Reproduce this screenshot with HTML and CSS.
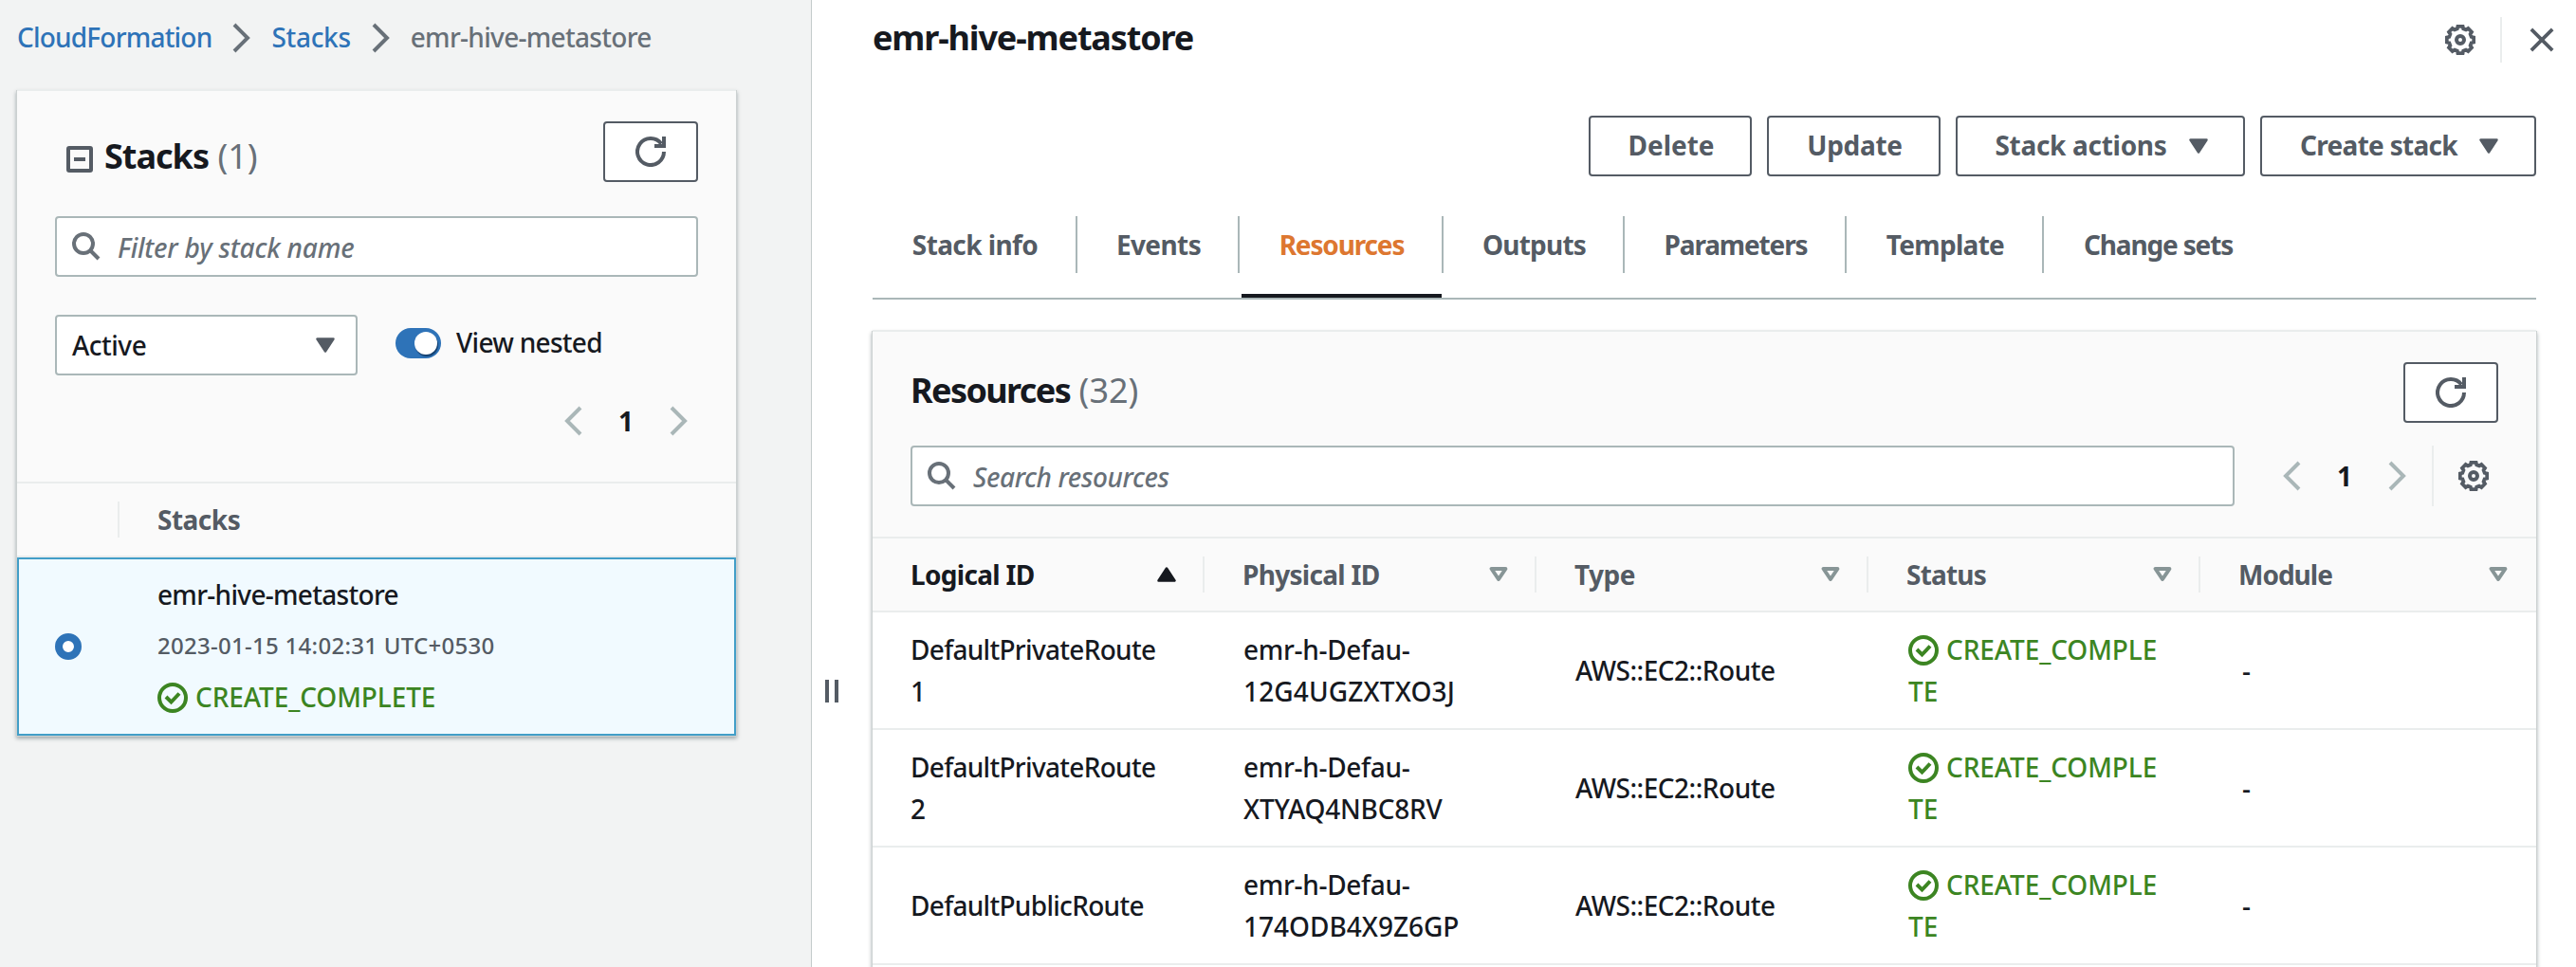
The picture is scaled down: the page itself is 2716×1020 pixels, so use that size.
FILE: index.html
```html
<!DOCTYPE html>
<html lang="en">
<head>
<meta charset="utf-8">
<title>CloudFormation - Stack emr-hive-metastore</title>
<link rel="stylesheet" href="styles.css">
</head>
<body>
<svg class="defs" aria-hidden="true">
  <symbol id="refresh" viewBox="0 0 32 32"><path d="M30 16A14 14 0 1 1 27.2 7.6M30 0V10H20" fill="none" stroke="currentColor" stroke-width="4"/></symbol>
  <symbol id="search" viewBox="0 0 30 30"><circle cx="12" cy="12" r="10" fill="none" stroke="currentColor" stroke-width="4"/><path d="M19 19L28 28" stroke="currentColor" stroke-width="4"/></symbol>
  <symbol id="right" viewBox="0 0 20 32"><path d="M2 2L16 16L2 30" fill="none" stroke="currentColor" stroke-width="4"/></symbol>
  <symbol id="left" viewBox="0 0 20 32"><path d="M18 2L4 16L18 30" fill="none" stroke="currentColor" stroke-width="4"/></symbol>
  <symbol id="caret" viewBox="0 0 20 16"><path d="M1.5 1.5H18.5L10 14.5Z" fill="currentColor" stroke="currentColor" stroke-width="2.5" stroke-linejoin="round"/></symbol>
  <symbol id="sort" viewBox="0 0 20 16"><path d="M2.6 2H17.4L10 13Z" fill="none" stroke="currentColor" stroke-width="4" stroke-linejoin="round"/></symbol>
  <symbol id="check" viewBox="0 0 32 32"><circle cx="16" cy="16" r="14" fill="none" stroke="currentColor" stroke-width="4"/><path d="M9 15L14.5 20.5L23 11.5" fill="none" stroke="currentColor" stroke-width="4"/></symbol>
  <symbol id="gear" viewBox="-16 -16 32 32"><path d="M14.2-2.6V2.6L11.7 3.2L10.6 6L12 8.3L8.3 12L6 10.6L3.2 11.7L2.6 14.2H-2.6L-3.2 11.7L-6 10.6L-8.3 12L-12 8.3L-10.6 6L-11.7 3.2L-14.2 2.6V-2.6L-11.7-3.2L-10.6-6L-12-8.3L-8.3-12L-6-10.6L-3.2-11.7L-2.6-14.2H2.6L3.2-11.7L6-10.6L8.3-12L12-8.3L10.6-6L11.7-3.2Z" fill="none" stroke="currentColor" stroke-width="3.8"/><circle r="4" fill="none" stroke="currentColor" stroke-width="4"/></symbol>
</svg>
<div class="app">
  <aside class="side">
    <nav class="crumbs">
      <a class="ls8">CloudFormation</a><svg class="chev"><use href="#right"/></svg>
      <a class="ls3">Stacks</a><svg class="chev"><use href="#right"/></svg>
      <span class="ls7">emr-hive-metastore</span>
    </nav>
    <section class="panel stacks">
      <div class="stacks-tools">
        <div class="row title-row">
          <svg class="minus" viewBox="0 0 28 28"><rect x="2" y="2" width="24" height="24" rx="1" fill="none" stroke="currentColor" stroke-width="4"/><path d="M8 14H20" stroke="currentColor" stroke-width="4"/></svg>
          <h2 class="heading"><b class="ls10">Stacks</b> <span>(1)</span></h2>
          <button class="btn refresh"><svg class="i32"><use href="#refresh"/></svg></button>
        </div>
        <div class="field filter"><svg class="i30"><use href="#search"/></svg><span class="ls2">Filter by stack name</span></div>
        <div class="row options">
          <div class="field select"><span class="ls5">Active</span><svg class="caret"><use href="#caret"/></svg></div>
          <div class="toggle"><span class="knob"></span></div>
          <span class="ls7 nested">View nested</span>
        </div>
        <div class="pager"><svg class="chev"><use href="#left"/></svg><b>1</b><svg class="chev"><use href="#right"/></svg></div>
      </div>
      <div class="stacks-head"><i></i><b class="ls5">Stacks</b></div>
      <div class="stack-item">
        <span class="radio"></span>
        <div class="stack-text">
          <div class="ls7">emr-hive-metastore</div>
          <div class="date">2023-01-15 14:02:31 UTC+0530</div>
          <div class="ok"><svg class="i32"><use href="#check"/></svg>CREATE_COMPLETE</div>
        </div>
      </div>
    </section>
  </aside>
  <div class="splitter"><i></i><i></i></div>
  <main class="main">
    <header class="top">
      <h1 class="heading"><b class="ls11">emr-hive-metastore</b></h1>
      <svg class="i32"><use href="#gear"/></svg>
      <svg class="close" viewBox="0 0 28 28"><path d="M2 2L26 26M26 2L2 26" stroke="currentColor" stroke-width="4"/></svg>
    </header>
    <div class="actions">
      <button class="btn">Delete</button>
      <button class="btn ls3">Update</button>
      <button class="btn ls3">Stack actions<svg class="caret"><use href="#caret"/></svg></button>
      <button class="btn ls7">Create stack<svg class="caret"><use href="#caret"/></svg></button>
    </div>
    <nav class="tabs">
      <a class="ls6">Stack info</a><a class="ls6">Events</a><a class="ls11 active">Resources</a><a class="ls8">Outputs</a><a class="ls11">Parameters</a><a class="ls7">Template</a><a class="ls11">Change sets</a>
    </nav>
    <section class="panel resources">
      <div class="res-tools">
        <div class="row">
          <h2 class="heading"><b class="ls14">Resources</b> <span>(32)</span></h2>
          <button class="btn refresh"><svg class="i32"><use href="#refresh"/></svg></button>
        </div>
        <div class="row search-row">
          <div class="field search"><svg class="i30"><use href="#search"/></svg><span class="ls4">Search resources</span></div>
          <div class="pager"><svg class="chev"><use href="#left"/></svg><b>1</b><svg class="chev"><use href="#right"/></svg></div>
          <div class="prefs"><svg class="i32"><use href="#gear"/></svg></div>
        </div>
      </div>
      <div class="grid thead">
        <div class="sorted"><span class="ls7">Logical ID</span><svg class="caret up"><use href="#caret"/></svg></div>
        <div><span class="ls7">Physical ID</span><svg class="caret"><use href="#sort"/></svg></div>
        <div><span class="ls5">Type</span><svg class="caret"><use href="#sort"/></svg></div>
        <div><span class="ls8">Status</span><svg class="caret"><use href="#sort"/></svg></div>
        <div><span class="ls10">Module</span><svg class="caret"><use href="#sort"/></svg></div>
      </div>
      <div class="grid tr">
        <div class="ls7">DefaultPrivateRoute<br>1</div><div><span class="ls3">emr-h-Defau-</span><br><span class="wide">12G4UGZXTXO3J</span></div><div class="ls5">AWS::EC2::Route</div>
        <div class="ok"><svg class="i32"><use href="#check"/></svg>CREATE_COMPLE<br>TE</div><div>-</div>
      </div>
      <div class="grid tr">
        <div class="ls7">DefaultPrivateRoute<br>2</div><div><span class="ls3">emr-h-Defau-</span><br><span class="ls2">XTYAQ4NBC8RV</span></div><div class="ls5">AWS::EC2::Route</div>
        <div class="ok"><svg class="i32"><use href="#check"/></svg>CREATE_COMPLE<br>TE</div><div>-</div>
      </div>
      <div class="grid tr">
        <div class="ls7">DefaultPublicRoute</div><div><span class="ls3">emr-h-Defau-</span><br>174ODB4X9Z6GP</div><div class="ls5">AWS::EC2::Route</div>
        <div class="ok"><svg class="i32"><use href="#check"/></svg>CREATE_COMPLE<br>TE</div><div>-</div>
      </div>
    </section>
  </main>
</div>
</body>
</html>
```
FILE: styles.css
```css
* { box-sizing: border-box; }
html, body { margin: 0; height: 100%; overflow: hidden; }
body {
  background: #fff;
  color: #16191f;
  font: 500 28px/44px "Noto Sans", sans-serif;
}
svg { display: block; flex: none; }
.defs { display: none; }
b { font-weight: 700; }

.wide { letter-spacing: .15px; }
.ls2 { letter-spacing: -.2px; }
.ls3 { letter-spacing: -.3px; }
.ls4 { letter-spacing: -.4px; }
.ls5 { letter-spacing: -.5px; }
.ls6 { letter-spacing: -.6px; }
.ls7 { letter-spacing: -.7px; }
.ls8 { letter-spacing: -.8px; }
.ls10 { letter-spacing: -1px; }
.ls11 { letter-spacing: -1.15px; }
.ls14 { letter-spacing: -1.6px; }

.i32 { width: 32px; height: 32px; }
.i30 { width: 30px; height: 30px; }
.chev { width: 20px; height: 32px; }
.caret { width: 20px; height: 16px; }
.up { transform: rotate(180deg); }

.app { display: flex; height: 1020px; }
.row { display: flex; }

/* left pane */
.side {
  width: 856px;
  padding: 17px 0 0 18px;
  background: #f2f3f3;
  border-right: 1px solid #c3cbcb;
}
.crumbs { display: flex; height: 79px; color: #687078; }
.crumbs a { color: #2e73b8; }
.crumbs .chev { margin: 7px 21px 0 22px; }

.panel {
  background: #fff;
  box-shadow: 0 -2px 0 #eaeded, 0 0 0 1px #ccd1d1, 0 2px 4px 1px rgba(0, 28, 36, .35);
}
.stacks { width: 758px; }
.stacks-tools {
  height: 414px;
  padding: 32px 40px 0;
  background: #fafafa;
  border-bottom: 2px solid #eaeded;
}
.title-row { height: 64px; padding-left: 12px; }
.minus { width: 28px; height: 28px; margin: 26px 12px 0 0; color: #545b64; }
.heading { flex: 1; margin: 0; font-size: 36px; font-weight: 400; }
.heading span { color: #687078; }
.title-row .heading { padding-top: 15px; }

.btn {
  display: flex;
  align-items: center;
  justify-content: center;
  height: 64px;
  padding: 0 0 2px 2px;
  background: #fff;
  border: 2px solid #545b64;
  border-radius: 4px;
  color: #545b64;
  font-family: inherit;
  font-size: 28px;
  font-weight: 700;
}
.refresh { width: 100px; padding: 0; }

.field {
  display: flex;
  align-items: center;
  height: 64px;
  background: #fff;
  border: 2px solid #aab7b8;
  border-radius: 4px;
}
.filter, .search { padding-left: 16px; color: #687078; font-style: italic; }
.filter span, .search span { margin-left: 18px; padding-top: 1px; }
.filter { margin-top: 36px; }
.options { margin-top: 40px; }
.select { width: 319px; justify-content: space-between; padding: 0 22px 0 16px; }
.select .caret { color: #545b64; }
.toggle {
  display: flex;
  justify-content: flex-end;
  width: 48px;
  height: 32px;
  margin: 14px 16px 0 40px;
  padding: 4px;
  background: #2e73b8;
  border-radius: 16px;
}
.knob { width: 24px; height: 24px; border-radius: 50%; background: #fff; box-shadow: 1px 2px 1px rgba(0, 28, 60, .6); }
.nested { padding-top: 7px; }
.pager { display: flex; align-items: center; color: #aab7b8; }
.pager b { width: 92px; text-align: center; color: #16191f; }
.stacks .pager { justify-content: flex-end; height: 44px; margin: 26px 10px 0 0; }

.stacks-head {
  display: flex;
  align-items: center;
  height: 78px;
  background: #fafafa;
  border-bottom: 2px solid #eaeded;
  color: #545b64;
}
.stacks-head i { width: 2px; height: 38px; margin: 0 40px 0 106px; background: #eaeded; }

.stack-item {
  display: flex;
  height: 188px;
  padding: 10px 0 0 38px;
  background: #f1faff;
  border: 2px solid #429ec8;
  line-height: 54px;
}
.radio { width: 28px; height: 28px; margin: 68px 80px 0 0; border: 8px solid #2e73b8; border-radius: 50%; background: #fff; }
.date { color: #545b64; font-size: 24px; letter-spacing: .28px; }
.ok { color: #3c8522; }
.ok .i32 { display: inline-block; margin-right: 8px; vertical-align: -6px; }
.ok { letter-spacing: -.1px; }

/* draggable divider between the panes */
.splitter { display: flex; gap: 6px; width: 64px; padding: 717px 0 0 14px; }
.splitter i { width: 4px; height: 24px; background: #545b64; }

/* right pane */
.main { width: 1754px; padding-top: 17px; }
.top { display: flex; height: 105px; color: #545b64; }
.top .heading { padding-top: 1px; color: #16191f; }
.top .i32 { margin: 9px 26px 0 0; }
.top .close {
  width: 61px;
  height: 48px;
  margin: 1px -23px 0 0;
  padding: 10px 4px 10px 29px;
  border-left: 2px solid #eaeded;
}
.actions { display: grid; grid-template-columns: 172px 183px 305px 291px; gap: 16px; justify-content: end; }
.actions .caret { margin: 2px 0 0 23px; }

.tabs {
  display: grid;
  grid-template-columns: 216px 171px 215px 191px 234px 208px 241px;
  height: 88px;
  margin-top: 42px;
  margin-bottom: 34px;
  box-shadow: inset 0 -2px #aab7b8;
  color: #545b64;
  font-weight: 700;
  text-align: center;
}
.tabs a { height: 60px; padding: 8px 0 0 2px; border-right: 2px solid #aab7b8; }
.tabs a:last-child { border: 0; padding-left: 0; }
.tabs .active { color: #dd7730; }
.tabs .active::after { content: ""; display: block; height: 4px; margin: 30px 0 0; background: #16191f; }

.res-tools { height: 218px; padding: 32px 40px 0; background: #fafafa; border-bottom: 2px solid #eaeded; }
.res-tools .heading { padding-top: 8px; }
.search-row { margin-top: 24px; }
.search { width: 1396px; }
.search-row .pager { margin: 0 26px 0 50px; }
.prefs { padding: 16px 0 16px 26px; border-left: 2px solid #eaeded; }
.search-row svg, .prefs { color: #545b64; }
.search-row .pager svg { color: #aab7b8; }
.search .i30 { color: #687078; }

.resources { height: 720px; }
.grid { display: grid; grid-template-columns: repeat(4, 350px) 354px; align-items: center; }
.thead { height: 78px; background: #fafafa; border-bottom: 2px solid #eaeded; color: #545b64; font-weight: 700; }
.thead div {
  display: flex;
  align-items: center;
  justify-content: space-between;
  height: 38px;
  padding: 0 28px 0 40px;
  border-right: 2px solid #eaeded;
}
.thead div:last-child { border: 0; padding-right: 30px; }
.thead .sorted { color: #16191f; }
.thead .caret { color: #879596; }
.thead .sorted .caret { color: #16191f; }
.tr { height: 124px; padding-bottom: 2px; box-shadow: inset 0 -2px #eaeded; }
.tr div { padding-left: 41px; }
.tr div:first-child { padding-left: 40px; }
.tr .ok { padding-left: 42px; }
.tr div:last-child { padding-left: 44px; }
```
